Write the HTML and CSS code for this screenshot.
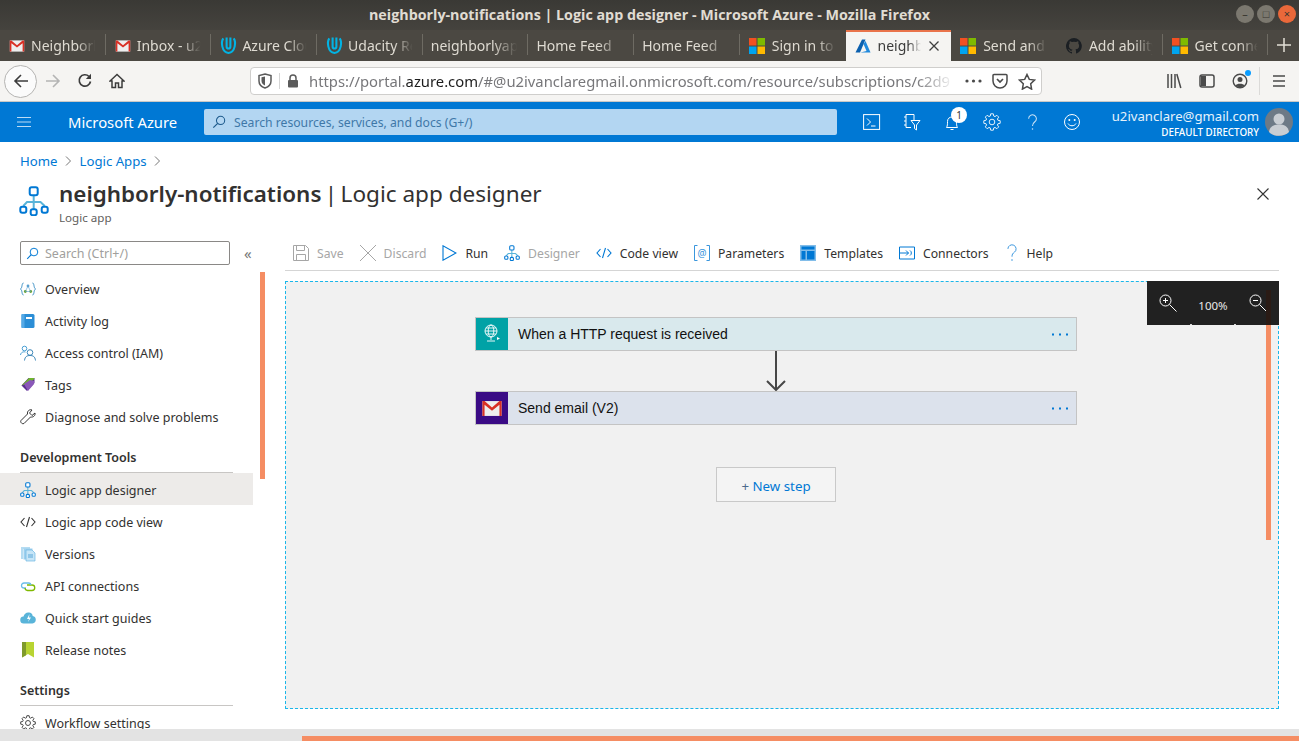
FILE: index.html
```html
<!DOCTYPE html>
<html lang="en">
<head>
    <meta charset="UTF-8">
    <title>neighborly-notifications | Logic app designer - Microsoft Azure</title>
    <link rel="stylesheet" href="styles.css">
</head>
<body>
    <svg class="defs" width="0" height="0">
        <symbol id="gmail" viewBox="0 0 20 16"><rect x="1" y="1" width="18" height="14" fill="#eee"/><path d="M1 15V1h2l7 6 7-6h2v14h-2V4.500l-7 5.500-7-5.500V15z" fill="#d93025"/></symbol>
        <symbol id="udacity" viewBox="0 0 18 20"><path d="M3.500 2.500C1 6 1.500 17 9 18c7.500-1 8-12 5.500-15.500" fill="none" stroke="#02b3e4" stroke-width="2.200"/><path d="M7 1.500V11c0 3 4 3 4 0V1.500" fill="none" stroke="#02b3e4" stroke-width="2.200"/></symbol>
        <symbol id="ms" viewBox="0 0 16 16"><rect width="7.500" height="7.500" fill="#f25022"/><rect x="8.500" width="7.500" height="7.500" fill="#7fba00"/><rect y="8.500" width="7.500" height="7.500" fill="#00a4ef"/><rect x="8.500" y="8.500" width="7.500" height="7.500" fill="#ffb900"/></symbol>
        <symbol id="flow" viewBox="0 0 30 30"><path d="M14.700 9v15M4.300 20L8 16h13.500l4.200 4" fill="none" stroke="#59b4d9" stroke-width="2"/><g fill="#fff" stroke="#0078d4" stroke-width="2"><rect x="10.700" y="1.300" width="8" height="8" rx="2"/><rect x="1.300" y="20.700" width="6" height="6" rx="2"/><rect x="11.700" y="23.200" width="6" height="6" rx="2"/><rect x="22.700" y="20.700" width="6" height="6" rx="2"/></g></symbol>
        <symbol id="code" viewBox="0 0 16 16"><path d="M4.500 4L1 8l3.500 4M11.500 4L15 8l-3.500 4M9.500 3l-3 10" fill="none" stroke="currentColor" stroke-width="1.100"/></symbol>
        <symbol id="lens" viewBox="0 0 16 16"><circle cx="9.800" cy="6.200" r="4.700" fill="none" stroke="currentColor" stroke-width="1.200"/><path d="M6.500 9.500L1.500 14.500" stroke="currentColor" stroke-width="1.400"/></symbol>
        <symbol id="dots" viewBox="0 0 17 3"><rect width="2" height="2" y=".5" fill="#0078d4"/><rect x="7" width="2" height="2" y=".5" fill="#0078d4"/><rect x="14" width="2" height="2" y=".5" fill="#0078d4"/></symbol>
        <symbol id="gear" viewBox="0 0 18 18"><circle cx="9" cy="9" r="2.800" fill="none" stroke="currentColor"/><path d="M7.290 3.040L7.700.8h2.600l.41 2.240L12 3.570l1.880-1.280 1.830 1.830L14.430 6l.53 1.290 2.240.41v2.600l-2.240.41-.53 1.290 1.280 1.880-1.830 1.830L12 14.430l-1.290.53-.41 2.240H7.700l-.41-2.240L6 14.430l-1.880 1.280-1.830-1.830L3.570 12l-.53-1.290L.8 10.300V7.700l2.240-.41L3.570 6 2.290 4.120l1.830-1.830L6 3.570z" fill="none" stroke="currentColor"/></symbol>
    </svg>

    <div class="titlebar">
        <span class="window-title">neighborly-notifications | Logic app designer - Microsoft Azure - Mozilla Firefox</span>
        <div class="window-buttons">
            <span class="win-btn">&#8211;</span>
            <span class="win-btn">&#9633;</span>
            <span class="win-btn win-close">&#215;</span>
        </div>
    </div>

    <div class="tabstrip">
        <div class="tab"><svg class="fav fav-mail"><use href="#gmail"/></svg><span class="tab-label">Neighborly</span></div>
        <div class="tab"><svg class="fav fav-mail"><use href="#gmail"/></svg><span class="tab-label">Inbox - u2ivan</span></div>
        <div class="tab"><svg class="fav fav-u"><use href="#udacity"/></svg><span class="tab-label">Azure Cloud</span></div>
        <div class="tab"><svg class="fav fav-u"><use href="#udacity"/></svg><span class="tab-label">Udacity Reviews</span></div>
        <div class="tab tab-nofav"><span class="tab-label">neighborlyapp</span></div>
        <div class="tab tab-nofav"><span class="tab-label">Home Feed</span></div>
        <div class="tab tab-nofav"><span class="tab-label">Home Feed</span></div>
        <div class="tab tab-noline"><svg class="fav fav-ms"><use href="#ms"/></svg><span class="tab-label">Sign in to your</span></div>
        <div class="tab tab-active">
            <svg class="fav fav-ms" viewBox="0 0 16 16"><path d="M7 1.500h3.500L5 14.500H.5z" fill="#0a5fae"/><path d="M8.500 6l2-3 5 11.500H5.500l6-1.500z" fill="#1f88dc"/></svg>
            <span class="tab-label">neighborly</span>
            <svg class="tab-x" viewBox="0 0 10 10"><path d="M.5.500l9 9M9.500.500l-9 9" stroke="#3f3f3f" stroke-width="1.300"/></svg>
        </div>
        <div class="tab tab-noline"><svg class="fav fav-ms"><use href="#ms"/></svg><span class="tab-label">Send and receive</span></div>
        <div class="tab">
            <svg class="fav fav-ms" viewBox="0 0 16 16"><path fill="#1b1f23" d="M8 0a8 8 0 0 0-2.500 15.600c.4.100.5-.2.500-.4v-1.400c-2.200.5-2.700-1-2.700-1-.4-.9-.9-1.200-.9-1.200-.7-.5.100-.5.100-.5.800.1 1.200.8 1.200.8.700 1.200 1.900.9 2.300.7.100-.5.300-.9.500-1.100-1.800-.2-3.600-.9-3.600-4 0-.9.300-1.600.8-2.100-.1-.2-.4-1 .1-2.100 0 0 .7-.2 2.200.8a7.500 7.500 0 0 1 4 0c1.500-1 2.200-.8 2.200-.8.400 1.100.2 1.900.1 2.100.5.600.8 1.300.8 2.100 0 3.100-1.900 3.700-3.700 3.900.3.300.6.700.6 1.500v2.200c0 .2.100.5.600.4A8 8 0 0 0 8 0z"/></svg>
            <span class="tab-label">Add ability to</span>
        </div>
        <div class="tab"><svg class="fav fav-ms"><use href="#ms"/></svg><span class="tab-label">Get connection</span></div>
        <div class="tab-plus"><svg width="16" height="16" viewBox="0 0 16 16"><path d="M8 1v14M1 8h14" stroke="#e3dfd6" stroke-width="1.500"/></svg></div>
    </div>

    <div class="navbar">
        <div class="nav-back"><svg width="16" height="16" viewBox="0 0 16 16"><path d="M15 8H2M8 2L2 8l6 6" fill="none" stroke="#3c3c3c" stroke-width="1.600"/></svg></div>
        <svg class="nav-icon nav-forward" width="16" height="16" viewBox="0 0 16 16"><path d="M1 8h13M8 2l6 6-6 6" fill="none" stroke="#b4b4b4" stroke-width="1.600"/></svg>
        <svg class="nav-icon" width="16" height="16" viewBox="0 0 16 16"><path d="M13.500 8.500A5.700 5.700 0 1 1 12 3.500" fill="none" stroke="#3c3c3c" stroke-width="1.700"/><path d="M14 .8V6H8.800z" fill="#3c3c3c"/></svg>
        <svg class="nav-icon" width="16" height="16" viewBox="0 0 16 16"><path d="M8 1.500L1 8h2v6.500h3.500V10h3v4.500H13V8h2z" fill="none" stroke="#3c3c3c" stroke-width="1.500"/></svg>
        <div class="urlbar">
            <svg width="14" height="16" viewBox="0 0 14 16"><path d="M7 1l6 1.500V8c0 3.500-3 6-6 7-3-1-6-3.500-6-7V2.500z" fill="none" stroke="#5b5b5b" stroke-width="1.500"/><path d="M7 3.500V12.500C5 11.500 3.500 10 3.500 8V4.300z" fill="#5b5b5b"/></svg>
            <span class="url-sep"></span>
            <svg width="12" height="14" viewBox="0 0 12 14"><path d="M3 6V4a3 3 0 0 1 6 0v2" fill="none" stroke="#5b5b5b" stroke-width="1.500"/><rect x="1" y="6" width="10" height="7.500" rx="1" fill="#5b5b5b"/></svg>
            <span class="url-text">https://portal.<b>azure.com</b>/#@u2ivanclaregmail.onmicrosoft.com/resource/subscriptions/c2d9</span>
            <svg width="17" height="4" viewBox="0 0 17 4"><circle cx="2" cy="2" r="1.600" fill="#4a4a4a"/><circle cx="8.500" cy="2" r="1.600" fill="#4a4a4a"/><circle cx="15" cy="2" r="1.600" fill="#4a4a4a"/></svg>
            <svg width="16" height="16" viewBox="0 0 16 16"><path d="M2 1.500h12a1 1 0 0 1 1 1V8a7 7 0 0 1-14 0V2.500a1 1 0 0 1 1-1z" fill="none" stroke="#4a4a4a" stroke-width="1.500"/><path d="M5 6l3 3 3-3" fill="none" stroke="#4a4a4a" stroke-width="1.700"/></svg>
            <svg width="18" height="17" viewBox="0 0 18 17"><path d="M9 1.500l2.300 4.900 5.200.7-3.800 3.700.9 5.300L9 13.600l-4.600 2.500.9-5.300-3.800-3.700 5.200-.7z" fill="none" stroke="#4a4a4a" stroke-width="1.500"/></svg>
        </div>
        <div class="nav-right">
            <svg width="16" height="16" viewBox="0 0 16 16"><path d="M2 1v14M5.500 1v14M9 1v14M10.800 1l4 14" fill="none" stroke="#4a4a4a" stroke-width="1.500"/></svg>
            <svg width="16" height="16" viewBox="0 0 16 16"><rect x="1" y="2" width="14" height="12" rx="2" fill="none" stroke="#4a4a4a" stroke-width="1.500"/><rect x="2" y="3" width="5" height="10" fill="#4a4a4a"/></svg>
            <span class="account">
                <svg width="16" height="16" viewBox="0 0 16 16"><circle cx="8" cy="8" r="6.800" fill="none" stroke="#4a4a4a" stroke-width="1.400"/><circle cx="8" cy="6.500" r="2.500" fill="#4a4a4a"/><path d="M3.500 12.500c1-2.500 8-2.500 9 0-2 2-7 2-9 0z" fill="#4a4a4a"/></svg>
                <i class="account-dot"></i>
            </span>
            <span class="nav-div"></span>
            <svg width="12" height="14" viewBox="0 0 12 14"><path d="M0 2h12M0 7h12M0 12h12" stroke="#4a4a4a" stroke-width="1.500"/></svg>
        </div>
    </div>

    <header class="portal-head">
        <svg class="burger" width="14" height="12" viewBox="0 0 14 12"><path d="M0 1.500h14M0 6h14M0 10.500h14" stroke="#bcdcf5" stroke-width="1.200"/></svg>
        <span class="brand">Microsoft Azure</span>
        <div class="global-search">
            <svg class="search-icon" width="14" height="14"><use href="#lens"/></svg>
            <span>Search resources, services, and docs (G+/)</span>
        </div>
        <div class="head-icons">
            <span class="head-icon"><svg width="18" height="18" viewBox="0 0 18 18"><rect x=".6" y="1.600" width="16" height="14.800" fill="none" stroke="#fff"/><path d="M4 5.500l3.500 3.500L4 12.500M8 13h4.500" fill="none" stroke="#fff"/></svg></span>
            <span class="head-icon"><svg width="18" height="18" viewBox="0 0 18 18"><path d="M3 1.500h8v6M3 1.500v13h5M1 4h2M1 8h2M1 12h2M8 7.500h9l-3.500 4.500v5l-2-1.500V12z" fill="none" stroke="#fff"/></svg></span>
            <span class="head-icon"><svg width="18" height="18" viewBox="0 0 18 18"><path d="M3.500 14.500c1-1.500 1-3.500 1-6 0-3 2-4.500 4.500-4.500s4.500 1.500 4.500 4.500c0 2.500 0 4.500 1 6zM7.500 16.500h3" fill="none" stroke="#fff"/></svg><i class="badge">1</i></span>
            <span class="head-icon head-gear"><svg width="18" height="18"><use href="#gear"/></svg></span>
            <span class="head-icon"><svg width="11" height="17" viewBox="0 0 14 22"><path d="M2 6a5 5 0 1 1 8 4c-2 1.500-3 2.500-3 5.500" fill="none" stroke="#cfe5f7" stroke-width="1.300"/><circle cx="7" cy="19.500" r="1" fill="#cfe5f7"/></svg></span>
            <span class="head-icon"><svg width="18" height="18" viewBox="0 0 18 18"><circle cx="9" cy="9" r="7.500" fill="none" stroke="#fff"/><circle cx="6.300" cy="7" r="1" fill="#fff"/><circle cx="11.700" cy="7" r="1" fill="#fff"/><path d="M5 10.500c1.500 3 6.500 3 8 0" fill="none" stroke="#fff"/></svg></span>
        </div>
        <div class="user">
            <span class="user-mail">u2ivanclare@gmail.com</span>
            <span class="user-dir">DEFAULT DIRECTORY</span>
        </div>
        <svg class="avatar" width="28" height="28" viewBox="0 0 28 28"><circle cx="14" cy="14" r="14" fill="#6d7a86"/><circle cx="14" cy="11" r="5.500" fill="#c9ced3"/><path d="M4 24c1-6 5-7.500 10-7.500S23 18 24 24c-5 5-15 5-20 0z" fill="#c9ced3"/></svg>
    </header>

    <div class="portal">
        <div class="crumbs">
            <a>Home</a><svg width="7" height="10" viewBox="0 0 7 10"><path d="M1 .5L5.500 5 1 9.500" fill="none" stroke="#777"/></svg>
            <a>Logic Apps</a><svg width="7" height="10" viewBox="0 0 7 10"><path d="M1 .5L5.500 5 1 9.500" fill="none" stroke="#777"/></svg>
        </div>
        <div class="page-title">
            <svg class="title-icon" width="30" height="30"><use href="#flow"/></svg>
            <div class="title-text">
                <h1><b>neighborly-notifications</b> | <span class="title-rest">Logic app designer</span></h1>
                <p>Logic app</p>
            </div>
            <svg class="title-close" width="12" height="12" viewBox="0 0 12 12"><path d="M.5.500l11 11M11.500.500l-11 11" stroke="#333" stroke-width="1.100"/></svg>
        </div>

        <div class="blade">
            <aside class="sidebar">
                <div class="side-searchrow">
                    <div class="side-search"><svg width="13" height="13" class="search-icon"><use href="#lens"/></svg><span>Search (Ctrl+/)</span></div>
                    <span class="collapse">&#171;</span>
                </div>
                <ul class="side-list">
                    <li><svg width="16" height="16" viewBox="0 0 16 16"><path d="M3.500 2C1.500 2 2.500 7 .5 8c2 1 1 6 3 6M12.500 2c2 0 1 5 3 6-2 1-1 6-3 6" fill="none" stroke="#3a8fc5"/><circle cx="8" cy="5" r="1.400" fill="#59a0d0"/><circle cx="5.300" cy="10.500" r="1.400" fill="#6aa32d"/><circle cx="10.700" cy="10.500" r="1.400" fill="#6aa32d"/><path d="M8 5l-2.700 5.500h5.400z" fill="none" stroke="#59a0d0" stroke-width=".6"/></svg>Overview</li>
                    <li><svg width="16" height="16" viewBox="0 0 16 16"><rect x="1.500" y="1" width="13" height="14" rx="1.500" fill="#2b8ed6"/><rect x="1.500" y="1" width="3" height="14" fill="#55a9e6"/><rect x="6" y="4" width="6" height="2" fill="#fff"/></svg>Activity log</li>
                    <li><svg width="16" height="16" viewBox="0 0 16 16"><circle cx="4.500" cy="3.500" r="2.300" fill="none" stroke="#4aa0d5"/><path d="M.5 10c.5-3 3-3.500 5-3" fill="none" stroke="#4aa0d5"/><circle cx="10" cy="7.500" r="2.800" fill="none" stroke="#3d87b8"/><path d="M4.500 15.500c.5-4 2.500-5 5.500-5s5 1 5.500 5" fill="none" stroke="#3d87b8"/></svg>Access control (IAM)</li>
                    <li><svg width="16" height="16" viewBox="0 0 16 16"><path d="M8.500 1H14.500v5L7 14 1.500 8.500z" fill="#5a2d8f"/><path d="M9 1l5.500 0-1 2-9 4.500L1.500 8.500z" fill="#6fb52e"/><path d="M4 7l6-4 4 1v3l-6 7z" fill="#8a58b8"/></svg>Tags</li>
                    <li><svg width="16" height="16" viewBox="0 0 16 16"><path d="M15 4l-3 2.500-2.500-2.500L12 1C9.500 0 7 2 7.500 5L1 11.500c-1 1 .5 4 3 3l6.500-6.500C13.500 8.500 15.500 6.500 15 4z" fill="none" stroke="#333"/></svg>Diagnose and solve problems</li>
                </ul>
                <h4 class="side-heading">Development Tools</h4>
                <ul class="side-list">
                    <li class="side-current"><svg width="16" height="16"><use href="#flow"/></svg>Logic app designer</li>
                    <li><svg width="16" height="16"><use href="#code"/></svg>Logic app code view</li>
                    <li><svg width="16" height="16" viewBox="0 0 16 16"><path d="M1 1h9v2H3v10H1z" fill="#b5dcf2"/><rect x="3.500" y="2.500" width="9" height="11" fill="#9ed0ee"/><path d="M6 4h6l3 3v8H6z" fill="#c6e5f7" stroke="#6fb8e2" stroke-width=".7"/><path d="M8 9h5M8 11h5" stroke="#5aa7d8"/></svg>Versions</li>
                    <li><svg width="16" height="16" viewBox="0 0 16 16"><path d="M9 5H4a2.500 2.500 0 0 0 0 5h2" fill="none" stroke="#69bde8" stroke-width="1.300"/><path d="M7 7h5a2.700 2.700 0 0 1 0 5.500H7.500A2.700 2.700 0 0 1 5 10" fill="none" stroke="#7fb900" stroke-width="1.300"/><path d="M9 5a2.500 2.500 0 0 1 2 2" fill="none" stroke="#69bde8" stroke-width="1.300"/></svg>API connections</li>
                    <li><svg width="16" height="16" viewBox="0 0 16 16"><path d="M4 13.500a3.500 3.500 0 0 1-.5-7C4 4 6.500 2 9 2.500c2 0 3.500 1.500 3.700 3.500a3.800 3.800 0 0 1-.2 7.500z" fill="#59b4d9"/><path d="M9.500 4L7 9h2l-1 3 3-4.500H9z" fill="#fff"/></svg>Quick start guides</li>
                    <li><svg width="16" height="16" viewBox="0 0 16 16"><path d="M2 0h12v15.500l-6-3.500-6 3.500z" fill="#b8d432"/><path d="M2 0h4v13.200l-4 2.300z" fill="#7f9a2c"/></svg>Release notes</li>
                </ul>
                <h4 class="side-heading">Settings</h4>
                <ul class="side-list">
                    <li><svg width="16" height="16"><use href="#gear"/></svg>Workflow settings</li>
                </ul>
            </aside>
            <i class="scroll-left"></i>

            <main class="designer">
                <div class="toolbar">
                    <span class="tool tool-off"><svg width="16" height="16" viewBox="0 0 16 16"><path d="M.5.500h12l3 3v12H.5z" fill="none" stroke="#a6a6a6"/><path d="M3.500.500v5h8v-5M3.500 15.500v-6h9v6" fill="none" stroke="#a6a6a6"/></svg>Save</span>
                    <span class="tool tool-off"><svg width="16" height="16" viewBox="0 0 16 16"><path d="M0 0l16 16M16 0L0 16" stroke="#a6a6a6"/></svg>Discard</span>
                    <span class="tool"><svg width="15" height="16" viewBox="0 0 15 16"><path d="M1 .8v14.400L14 8z" fill="none" stroke="#0078d4" stroke-width="1.100"/></svg>Run</span>
                    <span class="tool tool-off"><svg width="16" height="16"><use href="#flow"/></svg>Designer</span>
                    <span class="tool"><svg width="16" height="16" class="blue"><use href="#code"/></svg>Code view</span>
                    <span class="tool"><svg width="16" height="16" viewBox="0 0 16 16"><path d="M3.500.500H.5v15h3M12.500.500h3v15h-3" fill="none" stroke="#3a96dd"/><text x="8" y="11.500" class="tool-at">@</text></svg>Parameters</span>
                    <span class="tool"><svg width="16" height="16" viewBox="0 0 16 16"><rect width="16" height="16" fill="#82bde9"/><rect x="1.500" y="1.500" width="13" height="3" fill="#0078d4"/><rect x="1.500" y="6" width="4" height="8.500" fill="#0078d4"/><rect x="7" y="6" width="7.500" height="8.500" fill="#0078d4"/></svg>Templates</span>
                    <span class="tool"><svg width="16" height="14" viewBox="0 0 16 14"><path d="M.5 1h15v12H.5z" fill="none" stroke="#0078d4"/><path d="M.5 7h9M7 4.500L9.500 7 7 9.500M11 4.500a3 3 0 0 1 0 5" fill="none" stroke="#0078d4"/></svg>Connectors</span>
                    <span class="tool"><svg width="14" height="18" viewBox="0 0 14 22"><path d="M2 6a5 5 0 1 1 8 4c-2 1.500-3 2.500-3 5.500" fill="none" stroke="#3a96dd" stroke-width="1.200"/><circle cx="7" cy="19.500" r="1" fill="#3a96dd"/></svg>Help</span>
                </div>

                <div class="canvas">
                    <div class="card card-http">
                        <span class="card-icon icon-http"><svg width="18" height="20" viewBox="0 0 18 20"><g fill="none" stroke="#fff" stroke-width=".9"><circle cx="8" cy="7" r="6"/><ellipse cx="8" cy="7" rx="2.800" ry="6"/><path d="M2 7h12M3 4h10M3 10h10M8 13v3M4 17h8"/></g><path d="M14 13l3 1.500L14 16z" fill="#fff"/></svg></span>
                        <span class="card-title">When a HTTP request is received</span>
                        <svg class="card-more" width="17" height="3"><use href="#dots"/></svg>
                    </div>
                    <svg class="arrow" width="20" height="40" viewBox="0 0 20 40"><path d="M10 0v39M1 30l9 9 9-9" fill="none" stroke="#474747" stroke-width="2"/></svg>
                    <div class="card card-mail">
                        <span class="card-icon icon-mail"><svg width="22" height="17"><use href="#gmail"/></svg></span>
                        <span class="card-title">Send email (V2)</span>
                        <svg class="card-more" width="17" height="3"><use href="#dots"/></svg>
                    </div>
                    <button class="new-step"><span class="plus">+</span> New step</button>

                    <div class="zoom-panel">
                        <svg width="18" height="18" viewBox="0 0 18 18"><circle cx="6.500" cy="6.500" r="5.500" fill="none" stroke="#fff"/><path d="M10.500 10.500l7 7M4 6.500h5M6.500 4v5" stroke="#fff"/></svg>
                        <span>100%</span>
                        <svg width="18" height="18" viewBox="0 0 18 18"><circle cx="6.500" cy="6.500" r="5.500" fill="none" stroke="#fff"/><path d="M10.500 10.500l7 7M4 6.500h5" stroke="#fff"/></svg>
                    </div>
                    <i class="scroll-right"></i>
                </div>
            </main>
        </div>
    </div>

    <div class="hscroll"><i></i></div>
</body>
</html>
```

FILE: styles.css
```css
* {
    box-sizing: border-box;
}
html, body {
    height: 100%;
}
body {
    margin: 0;
    overflow: hidden;
    display: flex;
    flex-direction: column;
    font-family: "Noto Sans", "Open Sans", sans-serif;
    font-size: 12.5px;
    color: #323130;
    background: #fff;
}
.defs {
    position: absolute;
}
ul {
    list-style: none;
    margin: 0;
    padding: 0;
}

/* firefox chrome */
.titlebar {
    height: 30px;
    flex: none;
    position: relative;
    display: flex;
    align-items: center;
    justify-content: center;
    background: linear-gradient(#3a3935, #45433e);
}
.window-title {
    color: #e0dcd3;
    font-family: "Open Sans", sans-serif;
    font-size: 14.3px;
    font-weight: 700;
    margin-top: -2px;
}
.window-buttons {
    position: absolute;
    right: 3px;
    top: 5px;
    display: flex;
    gap: 3px;
}
.win-btn {
    width: 18px;
    height: 18px;
    border-radius: 50%;
    background: #7b786f;
    color: #38362f;
    font-size: 11px;
    line-height: 17px;
    text-align: center;
}
.win-close {
    background: #e9683a;
}
.tabstrip {
    height: 31px;
    flex: none;
    display: flex;
    align-items: stretch;
    background: #4b4842;
}
.tab {
    width: 105.7px;
    flex: none;
    display: flex;
    align-items: center;
    gap: 7px;
    padding: 0 9px;
    color: #dfdbd2;
    font-size: 14px;
    position: relative;
    overflow: hidden;
}
.tab::after {
    content: "";
    position: absolute;
    right: 0;
    top: 4px;
    bottom: 6px;
    width: 1px;
    background: #6e6b63;
}
.tab-label {
    flex: 1;
    min-width: 0;
    white-space: nowrap;
    overflow: hidden;
    -webkit-mask-image: linear-gradient(90deg, #000 70%, transparent 98%);
    mask-image: linear-gradient(90deg, #000 70%, transparent 98%);
}
.tab-nofav {
    padding-left: 8px;
}
.tab-noline::after, .tab-active::after {
    display: none;
}
.fav {
    width: 16px;
    height: 14px;
    flex: none;
}
.fav-mail {
    margin-right: -1px;
}
.fav-u {
    width: 17px;
    height: 19px;
    margin-right: -2px;
}
.fav-ms {
    height: 16px;
}
.tab-active {
    background: #f5f4f2;
    color: #3c3c3c;
    border-top: 2px solid #e9734a;
    padding-bottom: 2px;
    padding-right: 12px;
}
.tab-x {
    width: 10px;
    height: 10px;
    flex: none;
}
.tab-plus {
    flex: 1;
    display: flex;
    align-items: center;
    justify-content: center;
    padding-bottom: 2px;
}
.navbar {
    height: 41px;
    flex: none;
    display: flex;
    align-items: center;
    padding: 0 14px 0 8px;
    background: #f5f4f2;
    border-bottom: 1px solid #c9c8c6;
}
.nav-back {
    width: 33px;
    height: 33px;
    margin-left: -4px;
    border: 1px solid #b5b4b2;
    border-radius: 50%;
    background: #fbfbfb;
    display: flex;
    align-items: center;
    justify-content: center;
}
.nav-icon {
    margin-left: 16px;
}
.nav-forward {
    margin-left: 8px;
}
.urlbar {
    width: 792px;
    height: 28px;
    margin-left: 125px;
    display: flex;
    align-items: center;
    padding: 0 5px 0 7px;
    gap: 10px;
    background: #fff;
    border: 1px solid #cfcecc;
    border-radius: 4px;
    flex: none;
}
.url-sep {
    width: 1px;
    height: 16px;
    background: #d5d5d5;
    margin: 0 -3px 0 -3px;
}
.url-text {
    flex: 1;
    white-space: nowrap;
    overflow: hidden;
    color: #77777a;
    font-size: 14.8px;
    -webkit-mask-image: linear-gradient(90deg, #000 94%, transparent);
    mask-image: linear-gradient(90deg, #000 94%, transparent);
}
.url-text b {
    color: #1c1c1c;
    font-weight: 400;
}
.nav-right {
    flex: 1;
    display: flex;
    align-items: center;
    justify-content: flex-end;
    gap: 17px;
}
.account {
    position: relative;
    display: flex;
}
.account-dot {
    position: absolute;
    top: -3px;
    right: -3px;
    width: 6px;
    height: 6px;
    border-radius: 50%;
    background: #0a9dff;
}
.nav-div {
    width: 1px;
    height: 28px;
    background: #dbdad8;
    margin: 0 -4px 0 -6px;
}

/* portal header */
.portal-head {
    height: 40px;
    flex: none;
    display: flex;
    align-items: center;
    padding: 0 6px 0 17px;
    background: #0078d4;
    color: #fff;
}
.brand {
    margin-left: 37px;
    width: 136px;
    font-size: 14.8px;
    white-space: nowrap;
}
.global-search {
    width: 633px;
    height: 26px;
    display: flex;
    align-items: center;
    gap: 8px;
    padding-left: 8px;
    border-radius: 2px;
    background: #b3d6f2;
    color: #3f78a8;
    font-size: 12.2px;
}
.search-icon {
    color: #1d5a8c;
    flex: none;
}
.head-icons {
    display: flex;
    margin-left: 15px;
}
.head-icon {
    position: relative;
    width: 40px;
    display: flex;
    align-items: center;
    justify-content: center;
}
.head-gear {
    color: #e3f0fa;
}
.badge {
    position: absolute;
    top: -6px;
    left: 19px;
    width: 16px;
    height: 16px;
    border-radius: 50%;
    background: #fff;
    color: #333;
    font-size: 10px;
    font-style: normal;
    line-height: 16px;
    text-align: center;
}
.user {
    flex: 1;
    display: flex;
    flex-direction: column;
    align-items: flex-end;
    padding: 3px 6px 0 0;
}
.user-mail {
    font-size: 13.15px;
    line-height: 17px;
    color: #e6f2fb;
}
.user-dir {
    font-size: 9.8px;
    line-height: 15px;
    font-weight: 500;
}
.avatar {
    flex: none;
}

/* blade */
.portal {
    flex: 1;
    min-height: 0;
    display: flex;
    flex-direction: column;
    overflow: hidden;
}
.crumbs {
    height: 38px;
    flex: none;
    padding-left: 20px;
    display: flex;
    align-items: center;
    gap: 7px;
    font-size: 13.2px;
    color: #0078d4;
}
.crumbs svg {
    margin-right: 1px;
}
.page-title {
    height: 60px;
    flex: none;
    display: flex;
    padding: 0 30px 0 20px;
}
.title-icon {
    margin: 6px 10px 0 -1px;
    flex: none;
}
.title-text {
    flex: 1;
}
h1 {
    margin: 0;
    font-size: 22.55px;
    font-weight: 400;
    line-height: 27px;
    color: #323130;
    word-spacing: -2.5px;
}
h1 b {
    font-size: 22.4px;
    font-weight: 600;
    word-spacing: 0;
}
.title-rest {
    word-spacing: 0;
}
.title-text p {
    margin: 3px 0 0;
    font-size: 11.6px;
    color: #5f5e5c;
}
.title-close {
    margin-top: 8px;
}
.blade {
    flex: 1;
    min-height: 0;
    display: flex;
    position: relative;
}
.sidebar {
    width: 253px;
    flex: none;
}
.side-searchrow {
    display: flex;
    align-items: center;
    padding: 1px 0 7px 20px;
}
.side-search {
    width: 210px;
    height: 24px;
    display: flex;
    align-items: center;
    gap: 6px;
    padding-left: 5px;
    border: 1px solid #8a8886;
    border-radius: 2px;
    color: #a19f9d;
}
.side-search .search-icon {
    color: #0078d4;
}
.collapse {
    margin-left: 14px;
    color: #777;
    font-size: 15px;
    line-height: 20px;
}
.side-list li {
    height: 32px;
    display: flex;
    align-items: center;
    gap: 9px;
    padding: 2px 0 0 20px;
    white-space: nowrap;
}
.side-list svg {
    flex: none;
    color: #333;
}
.side-current {
    background: #edebe9;
}
.side-heading {
    margin: 9px 20px 0;
    height: 32px;
    line-height: 34px;
    font-size: 12.5px;
    font-weight: 600;
    border-bottom: 1px solid #c8c6c4;
}
.scroll-left {
    position: absolute;
    left: 260px;
    top: 32px;
    width: 5px;
    height: 207px;
    background: #f58d63;
}
.designer {
    flex: 1;
    min-width: 0;
    display: flex;
    flex-direction: column;
    padding: 0 20px 20px 32px;
}
.toolbar {
    height: 31px;
    flex: none;
    display: flex;
    align-items: center;
    padding: 0 0 4px 8px;
    gap: 16px;
    border-bottom: 1px solid #d5d5d5;
    font-size: 12.2px;
}
.tool {
    display: flex;
    align-items: center;
    gap: 8px;
    white-space: nowrap;
}
.tool-off {
    color: #a6a6a6;
}
.tool svg.blue {
    color: #0078d4;
}
.tool-at {
    fill: #3a96dd;
    font-size: 10px;
    text-anchor: middle;
}
.canvas {
    position: relative;
    flex: 1;
    min-height: 0;
    margin: 10px 0 0;
    padding: 35px 12px 0 0;
    display: flex;
    flex-direction: column;
    align-items: center;
    background: #f1f1f1;
    border: 1px dashed #1ab7ea;
}
.card {
    width: 602px;
    height: 34px;
    flex: none;
    display: flex;
    align-items: center;
    border: 1px solid #c4c4c4;
    font-family: "Liberation Sans", Arial, sans-serif;
    font-size: 14px;
    color: #111;
}
.card-http {
    background: #d9e9ed;
}
.card-mail {
    background: #dce2ec;
}
.card-icon {
    width: 32px;
    height: 32px;
    flex: none;
    display: flex;
    align-items: center;
    justify-content: center;
}
.icon-http {
    background: #00a2a6;
}
.icon-mail {
    background: #3a0b85;
}
.card-title {
    flex: 1;
    padding-left: 10px;
}
.card-more {
    flex: none;
    margin-right: 7px;
}
.arrow {
    flex: none;
    display: block;
}
.new-step {
    width: 120px;
    height: 35px;
    flex: none;
    margin-top: 42px;
    padding: 2px 0 0;
    border: 1px solid #c9c9c9;
    background: #f4f4f4;
    color: #0078d4;
    font-family: inherit;
    font-size: 13.3px;
}
.plus {
    color: #4b6a8c;
}
.zoom-panel {
    position: absolute;
    top: -1px;
    right: -1px;
    width: 132px;
    height: 44px;
    display: flex;
    align-items: center;
    justify-content: space-between;
    padding: 0 12px;
    background: #212121;
    color: #e8e8e8;
    font-size: 11.5px;
}
.zoom-panel span {
    padding-top: 4px;
}
.zoom-panel::before, .zoom-panel::after {
    content: "";
    position: absolute;
    bottom: 0;
    width: 2px;
    height: 1px;
    background: #d8d8d8;
}
.zoom-panel::before {
    left: 43px;
}
.zoom-panel::after {
    left: 87px;
}
.scroll-right {
    position: absolute;
    top: 8px;
    right: 7px;
    width: 5px;
    height: 250px;
    background: linear-gradient(#2a1b15 35px, #f58d63 35px);
}
.hscroll {
    height: 12px;
    flex: none;
    display: flex;
    align-items: flex-end;
    padding-left: 302px;
    background: #e3e3e3;
}
.hscroll i {
    flex: 1;
    height: 5px;
    background: #f58d63;
}
```
